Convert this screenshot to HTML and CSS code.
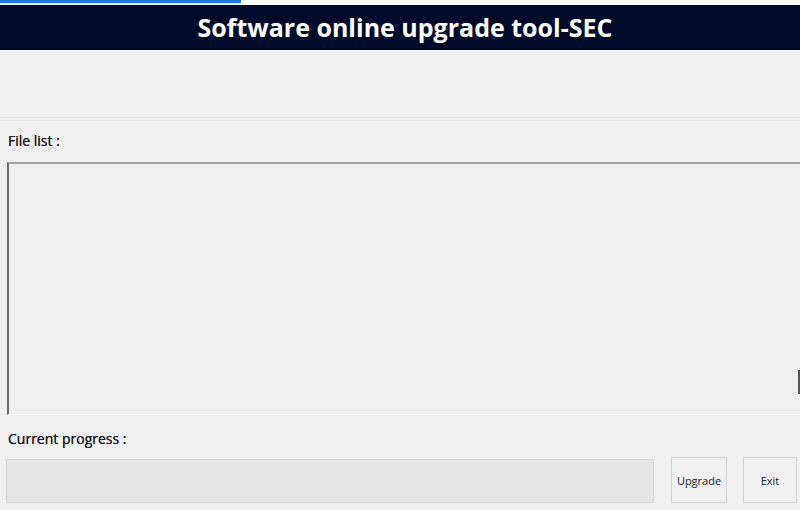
FILE: index.html
```html
<!DOCTYPE html>
<html>
<head>
<meta charset="utf-8">
<link rel="stylesheet" href="styles.css">
</head>
<body>
<div class="topstrip"><div class="tab"></div></div>
<header class="titlebar">Software online upgrade tool-SEC</header>
<div class="toolarea"></div>
<div class="sep"></div>
<main class="content">
  <div class="label file-label">File list :</div>
  <div class="listbox"><span class="scrollmark"></span></div>
  <div class="label progress-label">Current progress :</div>
  <div class="bottom">
    <div class="progress"></div>
    <button class="btn">Upgrade</button>
    <button class="btn">Exit</button>
  </div>
</main>
</body>
</html>
```

FILE: styles.css
```css
html, body {
  margin: 0;
  padding: 0;
  width: 800px;
  height: 510px;
  overflow: hidden;
  background: #f0f0f0;
  font-family: "Open Sans", "Noto Sans", "DejaVu Sans", sans-serif;
}
.topstrip {
  height: 5px;
  background: #ffffff;
}
.tab {
  width: 241px;
  height: 3px;
  background: #1f7ae0;
}
.titlebar {
  height: 45px;
  background: #000b2b;
  color: #ffffff;
  font-weight: 700;
  font-size: 25px;
  line-height: 45px;
  text-align: center;
  padding-left: 10px;
}
.toolarea {
  height: 66px;
  border-top: 1px solid #fafafa;
  background: #f0f0f0;
}
.sep {
  height: 2px;
  border-top: 1px solid #e6e6e6;
  border-bottom: 1px solid #e9e9e9;
}
.content {
  padding: 0 0 0 6px;
}
.label {
  font-size: 14px;
  color: #1a1a1a;
  text-shadow: 0 0 0.4px #1a1a1a;
}
.file-label {
  padding: 10px 0 0 2px;
  height: 31px;
  line-height: 20px;
}
.listbox {
  position: relative;
  height: 250px;
  margin-left: 1px;
  border-top: 2px solid #a0a0a0;
  border-left: 2px solid #6d6d6d;
  border-bottom: 1px solid #fafafa;
  background: #f0f0f0;
}
.scrollmark {
  position: absolute;
  right: 0;
  top: 206px;
  width: 2px;
  height: 24px;
  background: #555555;
}
.progress-label {
  padding: 15px 0 0 2px;
  height: 26px;
  line-height: 18px;
}
.bottom {
  display: flex;
  align-items: flex-end;
  gap: 17px;
}
.progress {
  width: 646px;
  height: 42px;
  margin-top: 3px;
  background: #e6e6e6;
  border: 1px solid #d4d4d4;
}
.btn {
  height: 46px;
  width: 56px;
  padding: 0;
  background: #f0f0f0;
  border: 1px solid #d2d2d2;
  font-family: "Open Sans", "Noto Sans", sans-serif;
  font-size: 11px;
  color: #222;
}
.btn + .btn {
  width: 54px;
  margin-left: -1px;
}
```
